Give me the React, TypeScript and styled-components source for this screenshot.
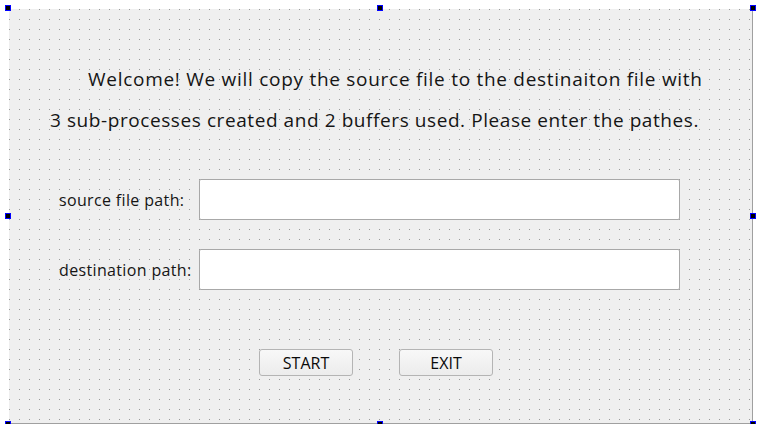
import React from "react";
import styled, { createGlobalStyle } from "styled-components";

const Global = createGlobalStyle`
  html, body { margin: 0; padding: 0; background: #ffffff; }
  body { font-family: "Open Sans", "Noto Sans", sans-serif; color: #151515; }
`;

const Page = styled.div`
  padding: 9px 0 0 9px;
`;

const Canvas = styled.div`
  position: relative;
  box-sizing: content-box;
  width: 743px;
  height: 414px;
  border-right: 1px solid #a0a0a0;
  border-bottom: 1px solid #a0a0a0;
  background-color: #9a9a9a;
  background-image:
    linear-gradient(to bottom, transparent 1px, #efefef 1px),
    linear-gradient(to right, transparent 1px, #efefef 1px);
  background-size: 10px 10px, 10px 10px;
  background-position: 0 0, 0 0;
  display: flex;
  flex-direction: column;
`;

const Intro = styled.div`
  display: flex;
  flex-direction: column;
  margin-top: 58px;
  gap: 17px;
`;

const IntroLine = styled.div<{ $indent: number; $spacing: number }>`
  padding-left: ${(p) => p.$indent}px;
  font-size: 19px;
  letter-spacing: ${(p) => p.$spacing}px;
  line-height: 24px;
  white-space: nowrap;
`;

const Fields = styled.div`
  display: flex;
  flex-direction: column;
  gap: 29px;
  margin-top: 47px;
`;

const FieldRow = styled.div`
  display: flex;
  align-items: center;
  padding-left: 50px;
`;

const Label = styled.label`
  width: 140px;
  font-size: 16px;
  letter-spacing: 0.35px;
  white-space: nowrap;
`;

const Input = styled.input`
  box-sizing: border-box;
  width: 481px;
  height: 41px;
  background: #ffffff;
  border: 1px solid #a8a8a8;
  border-radius: 2px;
  outline: none;
`;

const Buttons = styled.div`
  display: flex;
  gap: 46px;
  padding-left: 250px;
  margin-top: 59px;
`;

const Button = styled.button`
  box-sizing: border-box;
  width: 94px;
  height: 27px;
  border: 1px solid #b4b4b4;
  border-radius: 3px;
  background: linear-gradient(to bottom, #f8f8f8, #ececec);
  font-family: "Open Sans", "Noto Sans", sans-serif;
  font-size: 16px;
  color: #0a0a0a;
  padding: 0;
`;

const Handle = styled.div<{ $x: number; $y: number }>`
  position: absolute;
  left: ${(p) => p.$x}px;
  top: ${(p) => p.$y}px;
  width: 6px;
  height: 6px;
  box-sizing: border-box;
  border: 1px solid #0000ff;
  background: #000000;
`;

const handles = [
  [-4, -4], [368, -4], [741, -4],
  [-4, 204], [741, 204],
  [-4, 412], [368, 412], [741, 412],
];

export default function App() {
  return (
    <>
      <Global />
      <Page>
        <Canvas>
          <Intro>
            <IntroLine $indent={79} $spacing={0.72}>
              Welcome! We will copy the source file to the destinaiton file with
            </IntroLine>
            <IntroLine $indent={41} $spacing={0.58}>
              3 sub-processes created and 2 buffers used. Please enter the pathes.
            </IntroLine>
          </Intro>
          <Fields>
            <FieldRow>
              <Label>source file path:</Label>
              <Input />
            </FieldRow>
            <FieldRow>
              <Label>destination path:</Label>
              <Input />
            </FieldRow>
          </Fields>
          <Buttons>
            <Button>START</Button>
            <Button>EXIT</Button>
          </Buttons>
          {handles.map(([x, y], i) => (
            <Handle key={i} $x={x} $y={y} />
          ))}
        </Canvas>
      </Page>
    </>
  );
}
